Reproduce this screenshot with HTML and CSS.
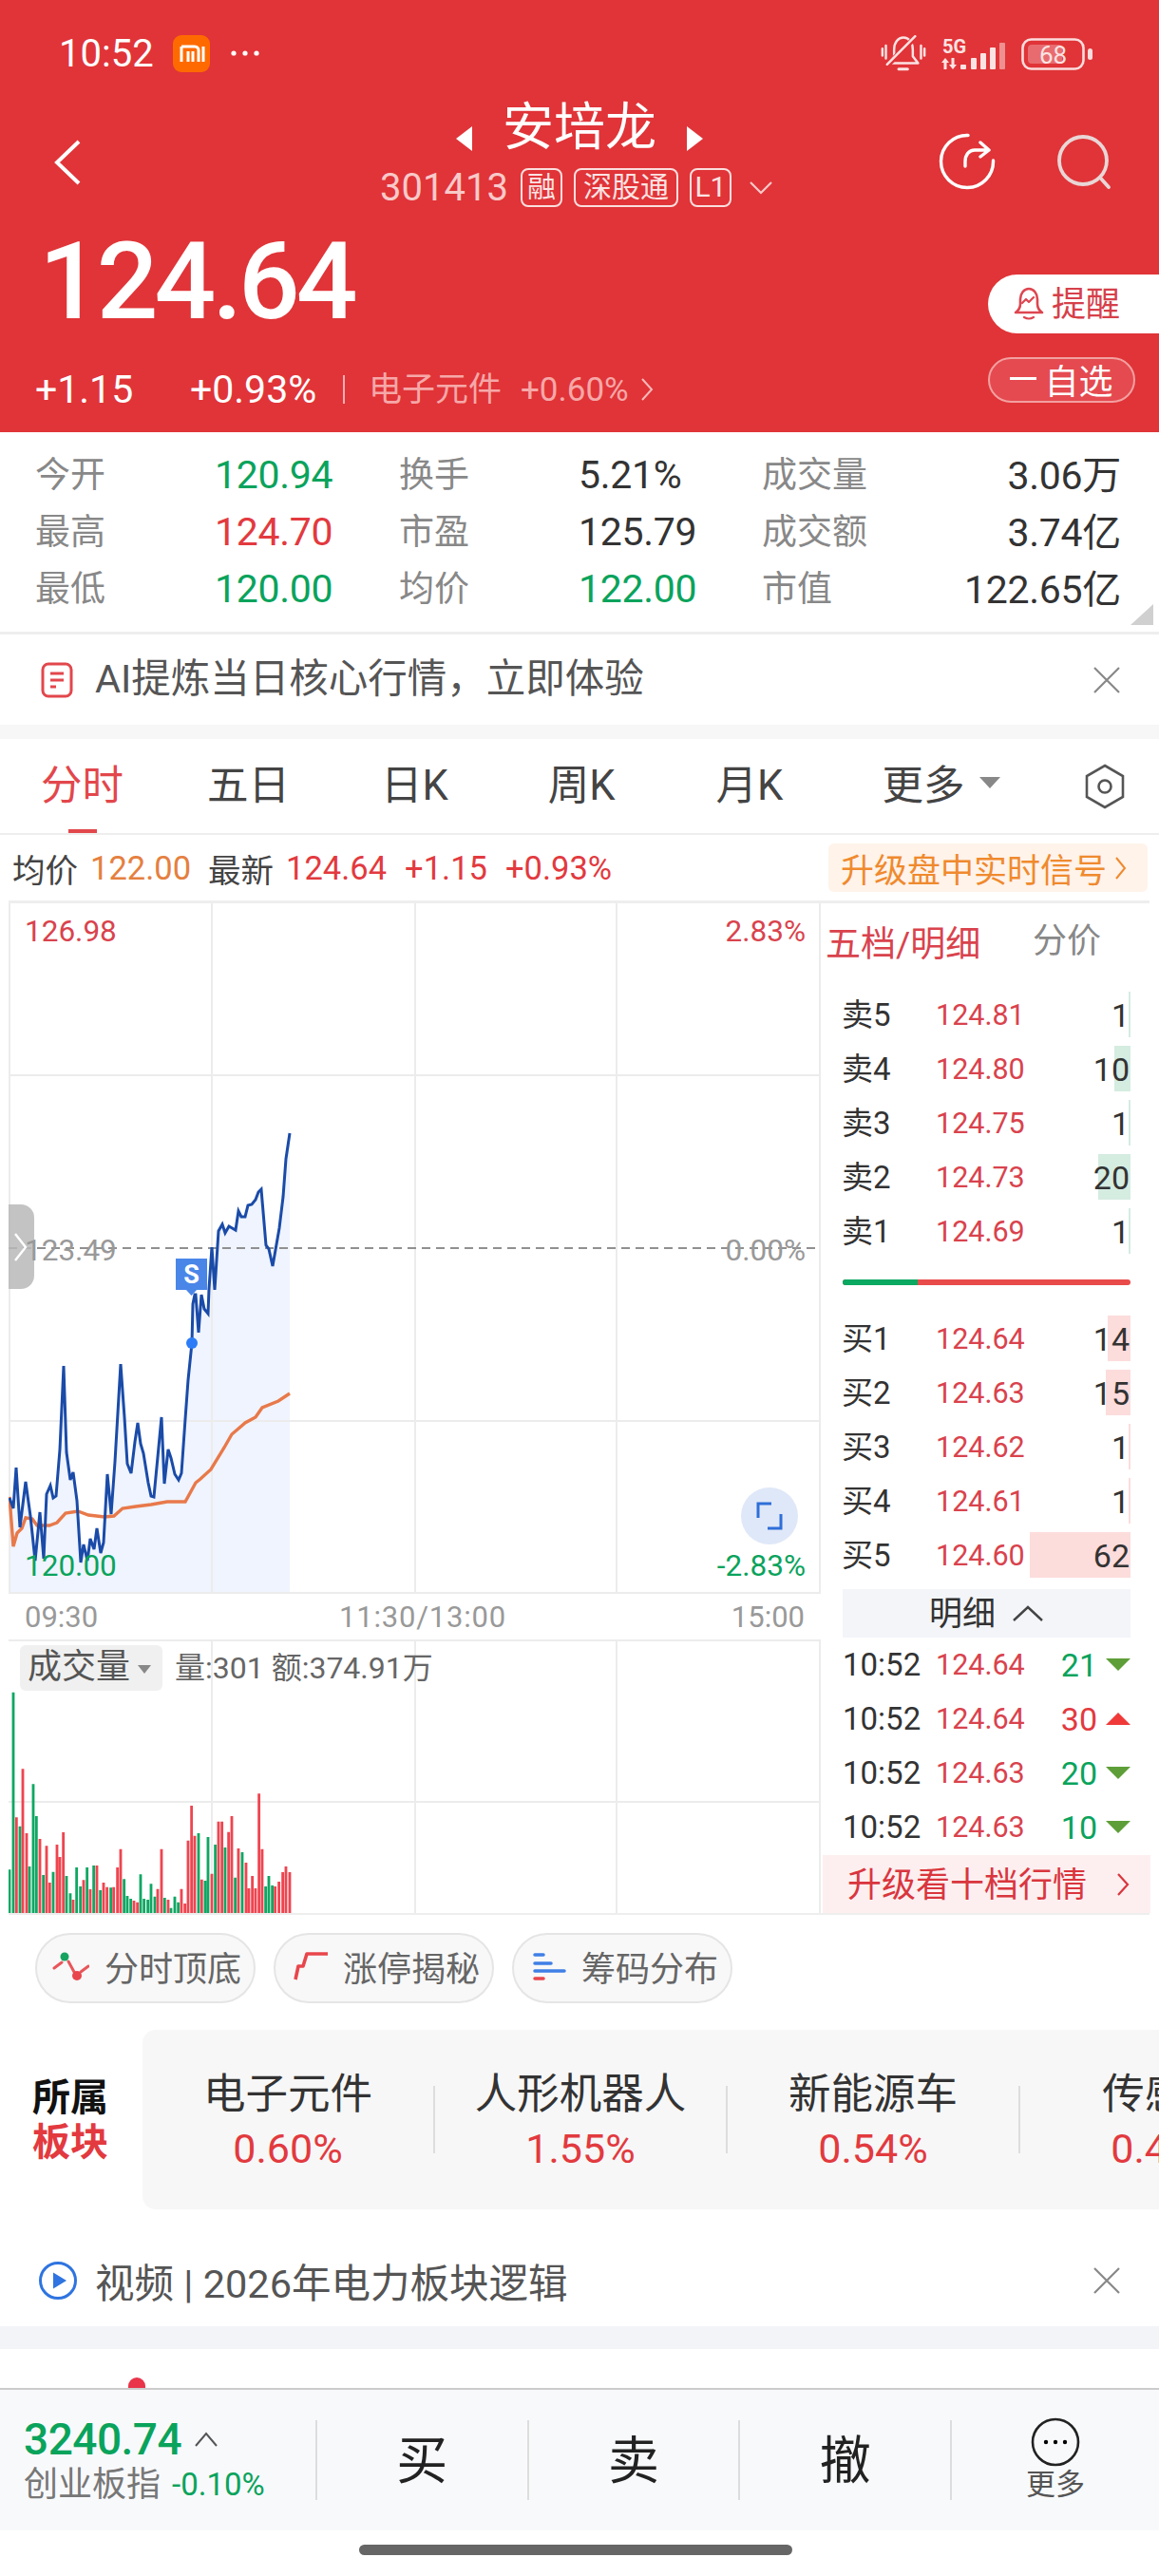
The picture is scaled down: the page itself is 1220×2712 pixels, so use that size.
FILE: index.html
```html
<!DOCTYPE html>
<html lang="zh-CN">
<head>
  <meta charset="UTF-8">
  <title>安培龙 301413</title>
  <link rel="stylesheet" href="styles.css">
</head>
<body>

<header class="top">
  <div class="status">
    <span class="clock">10:52</span>
    <svg class="mi" width="39" height="39" viewBox="0 0 39 39"><rect width="39" height="39" rx="9" fill="#ff6a00"/><path d="M9 12h14a4 4 0 0 1 4 4v12M9 12v16M16 17v11M21 17v11M32 12v16" fill="none" stroke="#fff" stroke-width="3"/></svg>
    <svg class="dots" width="32" height="8" viewBox="0 0 32 8"><circle cx="4" cy="4" r="2.6" fill="#fff"/><circle cx="16" cy="4" r="2.6" fill="#fff"/><circle cx="28" cy="4" r="2.6" fill="#fff"/></svg>
    <span class="status-right">
      <svg width="48" height="40" viewBox="0 0 156 130" fill="none" stroke="#fbe3e3" stroke-width="8" stroke-linecap="round"><path d="M28 96 46 72V50C46 25 60 8 78 8s32 17 32 42v22l18 24z" stroke-linejoin="round"/><path d="M122 4 22 104" stroke="#e03438" stroke-width="18"/><path d="M118 4 22 100"/><path d="M6 46v24M18 36v44M138 36v44M150 46v24"/><path d="M62 116h30" stroke-width="10"/></svg>
      <svg width="68" height="36" viewBox="0 0 68 36"><text x="1" y="17" class="net">5G</text><g fill="#fbe3e3"><path d="M4 22l4 5H5.500v7h-3v-7H0zM12 34l-4-5h2.500v-7h3v7H16z"/><rect x="20" y="29" width="6" height="5" rx="1"/><rect x="31" y="22" width="6" height="12" rx="1"/><rect x="41" y="17" width="6" height="17" rx="1"/><rect x="51" y="11" width="6" height="23" rx="1"/></g><rect x="61" y="6" width="6" height="28" rx="1" fill="#fff" opacity=".45"/></svg>
      <svg width="76" height="34" viewBox="0 0 76 34"><rect x="1.5" y="1.5" width="64" height="31" rx="9" fill="none" stroke="#fbdcdc" stroke-width="2.6"/><rect x="7" y="7" width="36" height="20" rx="4" fill="#fff" opacity=".28"/><rect x="70" y="11" width="5" height="12" rx="2.5" fill="#fbdcdc"/><text x="19" y="27" class="batt">68</text></svg>
    </span>
  </div>

  <div class="head">
    <svg class="back" width="28" height="48" viewBox="0 0 28 48"><path d="M26 2 3 24l23 22" fill="none" stroke="#fff" stroke-width="4"/></svg>
    <div class="name-col">
      <div class="name-row"><span class="tri tri-l"></span><span class="name">安培龙</span><span class="tri tri-r"></span></div>
      <div class="code-row">
        <span class="code">301413</span>
        <span class="tag">融</span>
        <span class="tag tag-wide">深股通</span>
        <span class="tag">L1</span>
        <svg width="24" height="14" viewBox="0 0 24 14"><path d="m1 1 11 11L23 1" fill="none" stroke="#f8c9c9" stroke-width="2.2"/></svg>
      </div>
    </div>
    <div class="head-icons">
      <svg width="60" height="60" viewBox="0 0 60 60" fill="none" stroke="#fff" stroke-width="3.4" stroke-linecap="round" stroke-linejoin="round"><path d="M31 2.500A27.500 27.500 0 1 0 57.500 29"/><path d="M28 35v-5c0-7 4-12 10-12h14M44 10l9 8-9 7"/></svg>
      <svg width="58" height="60" viewBox="0 0 58 60" fill="none" stroke="#e9d6d6" stroke-width="3.8" stroke-linecap="round"><circle cx="28" cy="29" r="25"/><path d="m46 47 9 10"/></svg>
    </div>
  </div>

  <div class="quote">
    <div class="quote-left">
      <div class="price">124.64</div>
      <div class="change">
        <span class="chg-a">+1.15</span>
        <span class="chg-b">+0.93%</span>
        <span class="chg-sep"></span>
        <span class="chg-sector">电子元件</span>
        <span class="chg-pct">+0.60%</span>
        <svg width="14" height="26" viewBox="0 0 14 26"><path d="m2 2 10 11L2 24" fill="none" stroke="#f6b9b9" stroke-width="2"/></svg>
      </div>
    </div>
    <div class="quote-right">
      <div class="btn-alert">
        <svg width="34" height="36" viewBox="0 0 34 36" fill="none" stroke="#dd4650" stroke-width="2.6" stroke-linejoin="round" stroke-linecap="round"><path d="M3 27c3-2 5-4 5-9v-5C8 7 12 2 17 2s9 5 9 11v5c0 5 2 7 5 9z"/><path d="M12 32q5 3 10 0M10 17l4-4 3 3 5-5" stroke-width="2.200"/></svg>
        <span class="btn-text">提醒</span>
      </div>
      <div class="btn-watch"><span class="minus"></span><span>自选</span></div>
    </div>
  </div>
</header>

<section class="stats">
  <span class="lbl">今开</span><span class="val green">120.94</span>
  <span class="lbl">换手</span><span class="val">5.21%</span>
  <span class="lbl">成交量</span><span class="val end">3.06万</span>
  <span class="lbl">最高</span><span class="val red">124.70</span>
  <span class="lbl">市盈</span><span class="val">125.79</span>
  <span class="lbl">成交额</span><span class="val end">3.74亿</span>
  <span class="lbl">最低</span><span class="val green">120.00</span>
  <span class="lbl">均价</span><span class="val green">122.00</span>
  <span class="lbl">市值</span><span class="val end">122.65亿</span>
  <span class="corner"></span>
</section>

<section class="notice">
  <svg width="34" height="38" viewBox="0 0 34 38" fill="none" stroke="#e2474c" stroke-width="3"><rect x="2" y="2" width="30" height="34" rx="6"/><path d="M10 12h14M10 19h14M10 26h6"/></svg>
  <span class="notice-text">AI提炼当日核心行情&#xFF0C;立即体验</span>
  <svg class="close" width="30" height="28" viewBox="0 0 30 28"><path d="m2 1 26 26M28 1 2 27" fill="none" stroke="#888" stroke-width="2.2"/></svg>
</section>

<div class="gap-a"></div>

<nav class="tabs">
  <span class="tab on">分时</span>
  <span class="tab">五日</span>
  <span class="tab">日K</span>
  <span class="tab">周K</span>
  <span class="tab">月K</span>
  <span class="tab">更多<i class="caret"></i></span>
  <svg class="hex" width="44" height="48" viewBox="0 0 44 48" fill="none" stroke="#555" stroke-width="2.6"><path d="M22 2 41 13v22L22 46 3 35V13z"/><circle cx="22" cy="24" r="6.5"/></svg>
</nav>

<div class="info">
  <span class="info-l">均价</span><span class="orange">122.00</span>
  <span class="info-l info-next">最新</span><span class="red">124.64</span>
  <span class="red info-gap">+1.15</span>
  <span class="red info-gap">+0.93%</span>
  <span class="signal">升级盘中实时信号<svg width="13" height="26" viewBox="0 0 13 26"><path d="m2 2 9 11-9 11" fill="none" stroke="#ef8a2e" stroke-width="2"/></svg></span>
</div>

<main class="board">
  <div class="charts">
    <div class="price-chart">
      <svg class="canvas" viewBox="9 951 855 727">
        <polygon fill="#eff4fe" points="10,1577 14,1588 17,1545 21,1608 27,1560 32,1596 37,1643 42,1592 46,1641 49,1573 53,1564 56,1577 59,1575 63,1526 67,1438 70,1529 74,1558 77,1550 81,1580 85,1645 88,1626 92,1643 95,1620 99,1631 102,1609 106,1635 109,1624 113,1552 117,1594 121,1539 127,1436 131,1492 134,1541 138,1551 142,1518 145,1498 148,1520 151,1530 156,1561 159,1575 162,1576 170,1492 173,1562 177,1526 180,1535 184,1552 188,1558 191,1551 195,1494 198,1453 202,1414 203,1373 205,1363 206,1363 209,1403 212,1363 215,1378 219,1383 220,1357 223,1313 226,1358 230,1296 234,1289 237,1298 241,1291 248,1295 251,1275 254,1281 258,1281 261,1269 265,1268 269,1263 272,1255 275,1252 280,1311 283,1315 287,1333 294,1293 298,1260 301,1220 305,1193 305,1677 10,1677"/>
        <path class="grid" d="M10 951V1678M223 951V1678M437 951V1678M649 951V1678M863 951V1678M9 1132H864M9 1496H864M9 1677H864"/>
        <path class="mid" d="M9 1314H864"/>
        <polyline class="avg" points="10,1576 14,1628 18,1614 23,1609 27,1598 34,1599 39,1606 52,1606 60,1603 69,1593 82,1591 93,1595 110,1597 120,1596 129,1588 143,1586 159,1584 176,1581 195,1581 206,1561 211,1557 222,1547 236,1524 244,1510 258,1498 269,1492 276,1482 293,1475 305,1467"/>
        <polyline class="last" points="10,1577 14,1588 17,1545 21,1608 27,1560 32,1596 37,1643 42,1592 46,1641 49,1573 53,1564 56,1577 59,1575 63,1526 67,1438 70,1529 74,1558 77,1550 81,1580 85,1645 88,1626 92,1643 95,1620 99,1631 102,1609 106,1635 109,1624 113,1552 117,1594 121,1539 127,1436 131,1492 134,1541 138,1551 142,1518 145,1498 148,1520 151,1530 156,1561 159,1575 162,1576 170,1492 173,1562 177,1526 180,1535 184,1552 188,1558 191,1551 195,1494 198,1453 202,1414 203,1373 205,1363 206,1363 209,1403 212,1363 215,1378 219,1383 220,1357 223,1313 226,1358 230,1296 234,1289 237,1298 241,1291 248,1295 251,1275 254,1281 258,1281 261,1269 265,1268 269,1263 272,1255 275,1252 280,1311 283,1315 287,1333 294,1293 298,1260 301,1220 305,1193"/>
        <circle cx="202" cy="1414" r="6" fill="#2b7cf6"/>
        <path d="M185 1325h33v33h-11l-5.500 6-5.500-6h-11z" fill="#4a86e8"/>
      </svg>
      <span class="handle"><svg width="14" height="30" viewBox="0 0 14 30"><path d="m1 1 11 14L1 29" fill="none" stroke="#fff" stroke-width="2.4"/></svg></span>
      <span class="mark-s">S</span>
      <span class="tick tick-tl red-soft">126.98</span>
      <span class="tick tick-tr red-soft">2.83%</span>
      <span class="tick tick-ml">123.49</span>
      <span class="tick tick-mr">0.00%</span>
      <span class="tick tick-bl green">120.00</span>
      <span class="tick tick-br green">-2.83%</span>
      <span class="expand"><svg width="30" height="36" viewBox="0 0 30 36" fill="none" stroke="#2f6fd8" stroke-width="3"><path d="M3 20V5h14M27 16v15H13"/></svg></span>
    </div>

    <div class="axis"><span>09:30</span><span class="axis-mid">11:30/13:00</span><span>15:00</span></div>

    <div class="volume">
      <svg class="canvas" viewBox="9 1726 855 288">
        <path class="grid" d="M223 1726V2014M437 1726V2014M649 1726V2014M863 1726V2014M9 1897H864M9 1727H864"/>
        <g transform="translate(0 1700) scale(.3333)" stroke-width="8.500">
          <path stroke="#0fa763" d="M30 942V805M42 942V245M63 942V668M93 942V795M105 942V535M115 942V636M137 942V822M168 942V812M210 942V825M222 942V880M242 942V798M254 942V858M275 942V798M296 942V792M317 942V870M350 942V862M392 942V835M402 942V888M413 942V897M444 942V820M455 942V897M467 942V900M477 942V850M489 942V890M520 942V894M540 942V926M552 942V890M563 942V908M627 942V690M648 942V840M657 942V702M680 942V726M711 942V735M743 942V830M765 942V750M839 942V858M849 942V825M860 942V855"/>
          <path stroke="#ee4550" d="M52 942V640M72 942V487M84 942V690M126 942V708M147 942V730M157 942V846M180 942V726M189 942V765M200 942V687M231 942V900M264 942V838M285 942V867M306 942V792M327 942V846M338 942V860M359 942V860M371 942V798M381 942V740M423 942V903M434 942V908M498 942V866M510 942V740M531 942V900M573 942V866M584 942V912M594 942V713M605 942V603M615 942V698M637 942V836M669 942V818M690 942V653M701 942V653M722 942V686M732 942V636M753 942V738M777 942V783M786 942V864M797 942V825M807 942V864M818 942V565M828 942V740M869 942V858M881 942V843M893 942V813M903 942V795M915 942V813"/>
        </g>
      </svg>
      <span class="vol-chip">成交量<i class="caret caret-sm"></i></span>
      <span class="vol-text">量:301 额:374.91万</span>
    </div>
  </div>

  <aside class="book">
    <div class="book-head"><span class="book-title">五档/明细</span><span class="book-sub">分价</span></div>

    <div class="row"><span class="side">卖5</span><span class="px">124.81</span><span class="bar ask" style="width:2px"></span><span class="qty">1</span></div>
    <div class="row"><span class="side">卖4</span><span class="px">124.80</span><span class="bar ask" style="width:17px"></span><span class="qty">10</span></div>
    <div class="row"><span class="side">卖3</span><span class="px">124.75</span><span class="bar ask" style="width:2px"></span><span class="qty">1</span></div>
    <div class="row"><span class="side">卖2</span><span class="px">124.73</span><span class="bar ask" style="width:34px"></span><span class="qty">20</span></div>
    <div class="row"><span class="side">卖1</span><span class="px">124.69</span><span class="bar ask" style="width:2px"></span><span class="qty">1</span></div>

    <div class="ratio"><span class="ratio-buy"></span></div>

    <div class="row"><span class="side">买1</span><span class="px">124.64</span><span class="bar bid" style="width:24px"></span><span class="qty">14</span></div>
    <div class="row"><span class="side">买2</span><span class="px">124.63</span><span class="bar bid" style="width:26px"></span><span class="qty">15</span></div>
    <div class="row"><span class="side">买3</span><span class="px">124.62</span><span class="bar bid" style="width:2px"></span><span class="qty">1</span></div>
    <div class="row"><span class="side">买4</span><span class="px">124.61</span><span class="bar bid" style="width:2px"></span><span class="qty">1</span></div>
    <div class="row"><span class="side">买5</span><span class="px">124.60</span><span class="bar bid" style="width:106px"></span><span class="qty">62</span></div>

    <div class="detail-bar"><span class="detail-text">明细</span><svg width="34" height="18" viewBox="0 0 34 18"><path d="M2 16 17 2l15 14" fill="none" stroke="#444" stroke-width="2.4"/></svg></div>

    <div class="row tick-row"><span class="t">10:52</span><span class="px">124.64</span><span class="vol green">21</span><i class="dn"></i></div>
    <div class="row tick-row"><span class="t">10:52</span><span class="px">124.64</span><span class="vol red">30</span><i class="up"></i></div>
    <div class="row tick-row"><span class="t">10:52</span><span class="px">124.63</span><span class="vol green">20</span><i class="dn"></i></div>
    <div class="row tick-row"><span class="t">10:52</span><span class="px">124.63</span><span class="vol green">10</span><i class="dn"></i></div>

    <div class="upgrade"><span class="upgrade-text">升级看十档行情</span><svg width="14" height="26" viewBox="0 0 14 26"><path d="m2 2 10 11L2 24" fill="none" stroke="#d9363e" stroke-width="2.2"/></svg></div>
  </aside>
</main>

<div class="chips">
  <span class="chip">
    <svg width="40" height="40" viewBox="0 0 40 40" fill="none" stroke="#e8565b" stroke-width="3" stroke-linecap="round"><path d="m3 22 8-6M18 15l6 11M31 26l8-6"/><circle cx="14" cy="10" r="4.500" fill="#16a35f" stroke="none"/><circle cx="27" cy="30" r="5" fill="#e8464c" stroke="none"/></svg>
    分时顶底
  </span>
  <span class="chip">
    <svg width="40" height="40" viewBox="0 0 40 40" fill="none" stroke="#e8464c" stroke-width="3.600" stroke-linejoin="round"><path d="m6 34 3-14h5l4-13h22"/></svg>
    涨停揭秘
  </span>
  <span class="chip">
    <svg width="40" height="40" viewBox="0 0 40 40" fill="none" stroke="#3f7fe6" stroke-width="3.500" stroke-linecap="round"><path d="M7 8h9M7 17h17M7 25h31"/><path d="M7 33h9" stroke="#e8464c"/></svg>
    筹码分布
  </span>
</div>

<section class="sectors">
  <div class="sector-label"><span>所属</span><span class="red">板块</span></div>
  <div class="sector-card">
    <div class="sector"><span class="sector-name">电子元件</span><span class="sector-pct">0.60%</span></div>
    <div class="sector"><span class="sector-name">人形机器人</span><span class="sector-pct">1.55%</span></div>
    <div class="sector"><span class="sector-name">新能源车</span><span class="sector-pct">0.54%</span></div>
    <div class="sector"><span class="sector-name">传感器</span><span class="sector-pct">0.47%</span></div>
  </div>
</section>

<section class="video">
  <svg width="42" height="42" viewBox="0 0 42 42"><circle cx="21" cy="21" r="18.500" fill="none" stroke="#2f74e0" stroke-width="3"/><path d="M16 12.500 30 21l-14 8.500z" fill="#2f74e0"/></svg>
  <span class="video-text">视频 | 2026年电力板块逻辑</span>
  <svg class="close" width="30" height="28" viewBox="0 0 30 28"><path d="m2 1 26 26M28 1 2 27" fill="none" stroke="#888" stroke-width="2.2"/></svg>
</section>

<div class="gap-b"></div>
<div class="peek"><span class="peek-dot"></span></div>

<footer class="trade">
  <div class="index">
    <div class="index-top"><span class="index-val">3240.74</span><svg width="26" height="18" viewBox="0 0 26 18"><path d="M2 16 13 3l11 13" fill="none" stroke="#555" stroke-width="2"/></svg></div>
    <div class="index-sub"><span>创业板指</span><span class="green index-pct">-0.10%</span></div>
  </div>
  <span class="action">买</span>
  <span class="action">卖</span>
  <span class="action">撤</span>
  <span class="action action-more">
    <svg width="52" height="52" viewBox="0 0 52 52"><circle cx="26" cy="26" r="24" fill="none" stroke="#222" stroke-width="2.600"/><circle cx="16" cy="26" r="2.200"/><circle cx="26" cy="26" r="2.200"/><circle cx="36" cy="26" r="2.200"/></svg>
    <span class="more-text">更多</span>
  </span>
</footer>

<div class="home"><span class="home-bar"></span></div>

</body>
</html>
```

FILE: styles.css
```css
html, body {
  margin: 0;
  padding: 0;
}

body {
  width: 1220px;
  height: 2712px;
  overflow: hidden;
  background: #fff;
  color: #333;
  font-family: Roboto, "Noto Sans CJK SC", sans-serif;
}

i {
  font-style: normal;
}

svg {
  flex: none;
}

.green { color: #0aa35c; }
.red { color: #e23a3f; }
.orange { color: #e5803f; }
.red-soft { color: #d9434d; }

/* red header */
.top {
  height: 455px;
  background: #e03438;
  color: #fff;
  overflow: hidden;
}

.status {
  height: 104px;
  padding: 37px 69px 0 62px;
  box-sizing: border-box;
  display: flex;
  align-items: flex-start;
}

.clock {
  font-size: 40px;
  line-height: 40px;
}

.mi {
  margin-left: 20px;
}

.dots {
  margin: 15px 0 0 21px;
}

.status-right {
  margin-left: auto;
  display: flex;
  align-items: center;
  gap: 16px;
}

.net {
  font-size: 20px;
  font-weight: 700;
  fill: #fbe3e3;
}

.batt {
  font-size: 26px;
  fill: #fbe3e3;
}

.head {
  display: grid;
  grid-template-columns: 1fr auto 1fr;
  height: 113px;
  padding: 0 50px;
}

.back {
  margin: 43px 0 0 7px;
}

.head-icons {
  justify-self: end;
  display: flex;
  gap: 64px;
  margin-top: 36px;
}

.name-col {
  display: flex;
  flex-direction: column;
  align-items: center;
}

.name-row {
  height: 62px;
  display: flex;
  align-items: center;
  gap: 32px;
}

.name {
  font-size: 54px;
  line-height: 62px;
}

.tri {
  width: 0;
  height: 0;
  margin-top: 22px;
  border-top: 13px solid transparent;
  border-bottom: 13px solid transparent;
}

.tri-l { border-right: 17px solid #fff; }
.tri-r { border-left: 17px solid #fff; }

.code-row {
  margin: 8px 0 0 -7px;
  display: flex;
  align-items: center;
  color: #f8c9c9;
}

.code {
  font-size: 40px;
  margin-right: 13px;
}

.tag {
  width: 44px;
  height: 41px;
  box-sizing: border-box;
  border: 2px solid #fbdede;
  border-radius: 8px;
  margin-right: 12px;
  color: #fbe3e3;
  font-size: 30px;
  line-height: 36px;
  text-align: center;
}

.tag-wide {
  width: 110px;
}

.code-row svg {
  margin-left: 7px;
}

.quote {
  display: flex;
  justify-content: space-between;
}

.quote-left {
  padding-left: 37px;
}

.price {
  margin: 19px 0 0 4px;
  font-size: 114px;
  line-height: 120px;
  font-weight: 500;
  letter-spacing: -4px;
}

.change {
  margin-top: 29px;
  height: 50px;
  display: flex;
  align-items: center;
  font-size: 41px;
}

.chg-a { width: 163px; }
.chg-b { width: 161px; }

.chg-sep {
  width: 2px;
  height: 30px;
  background: #f4aeae;
  margin-right: 25px;
}

.chg-sector {
  font-size: 35px;
  color: #f6a8a8;
  padding-bottom: 8px;
}

.chg-pct {
  margin: 0 12px 0 20px;
  font-size: 35px;
  color: #f6a8a8;
}

.quote-right {
  width: 180px;
  padding-top: 72px;
}

.btn-alert {
  height: 62px;
  background: #fff;
  border-radius: 31px 0 0 31px;
  color: #d6404a;
  font-size: 36px;
  display: flex;
  align-items: center;
  gap: 7px;
  padding-left: 26px;
}

.btn-text {
  padding-bottom: 6px;
}

.btn-watch {
  width: 155px;
  height: 48px;
  margin-top: 25px;
  box-sizing: border-box;
  border: 2px solid #f3a0a0;
  border-radius: 24px;
  background: #e54a50;
  font-size: 36px;
  display: flex;
  align-items: center;
  justify-content: center;
  gap: 8px;
  padding-bottom: 3px;
}

.minus {
  width: 28px;
  height: 3px;
  background: #fff;
}

/* stats grid */
.stats {
  position: relative;
  height: 213px;
  box-sizing: border-box;
  padding: 15px 40px 0 37px;
  border-bottom: 3px solid #eee;
  display: grid;
  grid-template-columns: 189px 194px 189px 193px 180px 1fr;
  grid-auto-rows: 60px;
  align-items: center;
}

.lbl {
  font-size: 37px;
  color: #888;
  padding-bottom: 7px;
}

.val {
  font-size: 41px;
  letter-spacing: -.3px;
}

.end {
  justify-self: end;
  padding-bottom: 6px;
}

.corner {
  position: absolute;
  right: 6px;
  bottom: 7px;
  width: 0;
  height: 0;
  border-left: 24px solid transparent;
  border-bottom: 22px solid #d0d0d0;
}

.notice {
  height: 95px;
  display: flex;
  align-items: center;
  padding: 0 40px 0 43px;
}

.notice-text {
  margin: 0 0 9px 23px;
  font-size: 41.500px;
  color: #555;
}

.close {
  margin-left: auto;
}

.gap-a {
  height: 15px;
  background: #f7f7f7;
}

/* period tabs */
.tabs {
  position: relative;
  height: 101px;
  box-sizing: border-box;
  border-bottom: 2px solid #eee;
  padding: 0 34px 0 43px;
  display: flex;
  align-items: center;
  gap: 104px;
  font-size: 43.500px;
  color: #444;
}

.tab {
  display: flex;
  align-items: center;
  white-space: nowrap;
  margin-bottom: 8px;
}

.tab:nth-child(1) { margin-right: -16px; }
.tab:nth-child(2) { margin-right: -8px; }
.tab:nth-child(3) { margin-right: 1px; }
.tab:nth-child(4) { margin-right: 2px; }

.on {
  color: #e2474c;
}

.on::after {
  content: "";
  position: absolute;
  left: 72px;
  bottom: 0;
  width: 30px;
  height: 4px;
  background: #e2474c;
}

.caret {
  display: inline-block;
  width: 0;
  height: 0;
  margin-left: 16px;
  border-left: 11px solid transparent;
  border-right: 11px solid transparent;
  border-top: 12px solid #888;
}

.hex {
  margin: 0 0 0 -16px;
}

.info {
  height: 69px;
  box-sizing: border-box;
  padding: 0 12px 0 13px;
  display: flex;
  align-items: center;
  gap: 13px;
  font-size: 34.500px;
}

.info-l {
  color: #444;
}

.info-next {
  margin-left: 5px;
}

.info-gap {
  margin-left: 6px;
}

.signal {
  margin-left: auto;
  width: 336px;
  height: 51px;
  box-sizing: border-box;
  padding-left: 13px;
  background: #fff3ea;
  border-radius: 6px;
  color: #ef8a2e;
  font-size: 35px;
  display: flex;
  align-items: center;
  gap: 8px;
}

/* chart + order book */
.board {
  margin-left: 9px;
  width: 1201px;
  height: 1068px;
  box-sizing: border-box;
  border-top: 3px solid #eee;
  border-bottom: 2px solid #eee;
  display: flex;
}

.charts {
  width: 854px;
}

.canvas {
  position: absolute;
  left: 0;
  top: 0;
  width: 855px;
  height: 100%;
}

.grid {
  fill: none;
  stroke: #ececec;
  stroke-width: 2;
}

.mid {
  fill: none;
  stroke: #909090;
  stroke-width: 2;
  stroke-dasharray: 9 6;
}

.avg {
  fill: none;
  stroke: #e8794a;
  stroke-width: 3.400;
}

.last {
  fill: none;
  stroke: #1a4ba8;
  stroke-width: 3;
}

.price-chart {
  position: relative;
  height: 727px;
}

.tick {
  position: absolute;
  font-size: 31.500px;
  line-height: 34px;
  color: #999;
}

.tick.green { color: #0aa35c; }
.tick.red-soft { color: #d9434d; }

.tick-tl { left: 17px; top: 13px; }
.tick-tr { right: 15px; top: 13px; }
.tick-ml { left: 17px; top: 349px; }
.tick-mr { right: 15px; top: 349px; }
.tick-bl { left: 17px; top: 681px; }
.tick-br { right: 15px; top: 681px; }

.handle {
  position: absolute;
  left: 0;
  top: 317px;
  width: 27px;
  height: 89px;
  background: rgba(185, 185, 185, .85);
  border-radius: 0 14px 14px 0;
  display: flex;
  align-items: center;
  padding-left: 6px;
  box-sizing: border-box;
}

.mark-s {
  position: absolute;
  left: 176px;
  top: 375px;
  width: 33px;
  color: #fff;
  font-size: 27px;
  font-weight: 700;
  line-height: 32px;
  text-align: center;
  z-index: 1;
}

.expand {
  position: absolute;
  left: 771px;
  top: 615px;
  width: 60px;
  height: 60px;
  border-radius: 50%;
  background: #dfe8f8;
  display: flex;
  align-items: center;
  justify-content: center;
}

.axis {
  height: 48px;
  box-sizing: border-box;
  padding: 0 16px 0 17px;
  display: flex;
  justify-content: space-between;
  align-items: center;
  font-size: 31px;
  color: #999;
}

.axis-mid {
  margin-left: 17px;
  letter-spacing: .8px;
}

.volume {
  position: relative;
  height: 288px;
}

.vol-chip {
  position: absolute;
  left: 12px;
  top: 6px;
  width: 150px;
  height: 48px;
  box-sizing: border-box;
  padding-left: 8px;
  border-radius: 6px;
  background: #f0f0f0;
  color: #555;
  font-size: 36px;
  line-height: 46px;
  white-space: nowrap;
}

.caret-sm {
  margin-left: 8px;
  vertical-align: middle;
  border-left-width: 7px;
  border-right-width: 7px;
  border-top-width: 9px;
}

.vol-text {
  position: absolute;
  left: 175px;
  top: 4px;
  font-size: 32px;
  color: #666;
  white-space: nowrap;
}

.book {
  width: 347px;
  box-sizing: border-box;
  padding: 0 20px 0 24px;
}

.book-head {
  height: 89px;
  padding-top: 13px;
  box-sizing: border-box;
  margin-left: -18px;
  display: flex;
  font-size: 37px;
}

.book-title {
  width: 218px;
  color: #d9434d;
}

.book-sub {
  color: #888;
  font-size: 36px;
  line-height: 54px;
}

.row {
  position: relative;
  height: 57px;
  display: flex;
  align-items: center;
}

.side {
  width: 99px;
  font-size: 33px;
  color: #333;
  padding-bottom: 5px;
  margin-left: -1px;
}

.px {
  font-size: 30.500px;
  color: #d9434d;
}

.qty {
  position: relative;
  margin-left: auto;
  font-size: 34px;
  padding-right: 1px;
}

.bar {
  position: absolute;
  right: 0;
  top: 4px;
  height: 48px;
}

.ask { background: #d5ece1; }
.bid { background: #fddcdc; }

.ratio {
  height: 6px;
  margin: 22px 0 28px;
  border-radius: 3px;
  background: #e94b4b;
  overflow: hidden;
}

.ratio-buy {
  display: block;
  width: 79px;
  height: 6px;
  background: #0aa860;
}

.detail-bar {
  height: 51px;
  margin-top: 7px;
  background: #f3f5f9;
  display: flex;
  align-items: center;
  justify-content: center;
  gap: 17px;
  font-size: 35px;
  color: #333;
}

.detail-text {
  padding-bottom: 6px;
}

.t {
  width: 98px;
  font-size: 33px;
}

.vol {
  margin-left: auto;
  font-size: 34px;
}

.dn, .up {
  width: 0;
  height: 0;
  margin-left: 9px;
  border-left: 13px solid transparent;
  border-right: 13px solid transparent;
}

.dn { border-top: 13px solid #5e9e38; }
.up { border-bottom: 13px solid #f03a3a; }

.upgrade {
  height: 61px;
  margin: 1px -21px 0 -21px;
  padding: 0 22px 0 26px;
  box-sizing: border-box;
  background: #fdeff0;
  color: #d9363e;
  font-size: 36px;
  display: flex;
  align-items: center;
  justify-content: space-between;
}

.upgrade-text {
  padding-bottom: 5px;
}

/* below chart */
.chips {
  height: 121px;
  box-sizing: border-box;
  padding: 19px 0 0 37px;
  display: flex;
  gap: 19px;
}

.chip {
  width: 232px;
  height: 74px;
  box-sizing: border-box;
  border: 2px solid #e5e5e5;
  border-radius: 37px;
  background: #f8f8f8;
  color: #666;
  font-size: 36px;
  display: flex;
  align-items: center;
  gap: 16px;
  padding: 0 0 5px 15px;
}

.sectors {
  height: 189px;
  display: flex;
  align-items: center;
}

.sector-label {
  width: 150px;
  box-sizing: border-box;
  padding-left: 34px;
  display: flex;
  flex-direction: column;
  font-size: 40px;
  line-height: 47px;
  font-weight: 700;
  color: #111;
}

.sector-label .red {
  color: #e23a3f;
}

.sector-card {
  flex: 1;
  height: 189px;
  background: #f7f7f7;
  border-radius: 14px 0 0 14px;
  display: flex;
  align-items: center;
  overflow: hidden;
}

.sector {
  flex: 0 0 308px;
  height: 71px;
  box-sizing: border-box;
  border-right: 2px solid #ddd;
  display: flex;
  flex-direction: column;
  align-items: center;
  justify-content: center;
  white-space: nowrap;
}

.sector-name {
  font-size: 44.500px;
  line-height: 60px;
  color: #333;
}

.sector-pct {
  font-size: 43px;
  line-height: 54px;
  color: #e23a3f;
}

.video {
  height: 123px;
  box-sizing: border-box;
  padding: 26px 40px 0 40px;
  display: flex;
  align-items: center;
}

.video-text {
  margin-left: 18px;
  font-size: 41.500px;
  color: #555;
}

.gap-b {
  height: 24px;
  background: #f3f4f8;
}

.peek {
  height: 41px;
  display: flex;
  align-items: flex-end;
  padding-left: 135px;
}

.peek-dot {
  width: 18px;
  height: 11px;
  background: #e9344a;
  border-radius: 9px 9px 0 0;
}

.trade {
  height: 150px;
  box-sizing: border-box;
  border-top: 2px solid #ccc;
  background: #f8f9fb;
  display: flex;
  align-items: center;
}

.index {
  width: 332px;
  box-sizing: border-box;
  padding-left: 25px;
}

.index-top {
  display: flex;
  align-items: center;
  gap: 13px;
}

.index-val {
  font-size: 46px;
  line-height: 52px;
  font-weight: 500;
  letter-spacing: -.5px;
  color: #0aa35c;
}

.index-sub {
  display: flex;
  align-items: center;
  gap: 12px;
  font-size: 36px;
  line-height: 44px;
  color: #777;
}

.index-pct {
  font-size: 33px;
}

.action {
  width: 223px;
  height: 84px;
  box-sizing: border-box;
  border-left: 2px solid #ddd;
  padding-bottom: 8px;
  display: flex;
  align-items: center;
  justify-content: center;
  font-size: 54px;
  color: #222;
}

.action-more {
  width: 220px;
  flex-direction: column;
  padding-bottom: 0;
}

.more-text {
  font-size: 31px;
  line-height: 38px;
  color: #555;
}

.home {
  height: 48px;
  display: flex;
  justify-content: center;
  padding: 15px 8px 0 0;
  box-sizing: border-box;
}

.home-bar {
  width: 456px;
  height: 11px;
  border-radius: 6px;
  background: #666;
}
```
